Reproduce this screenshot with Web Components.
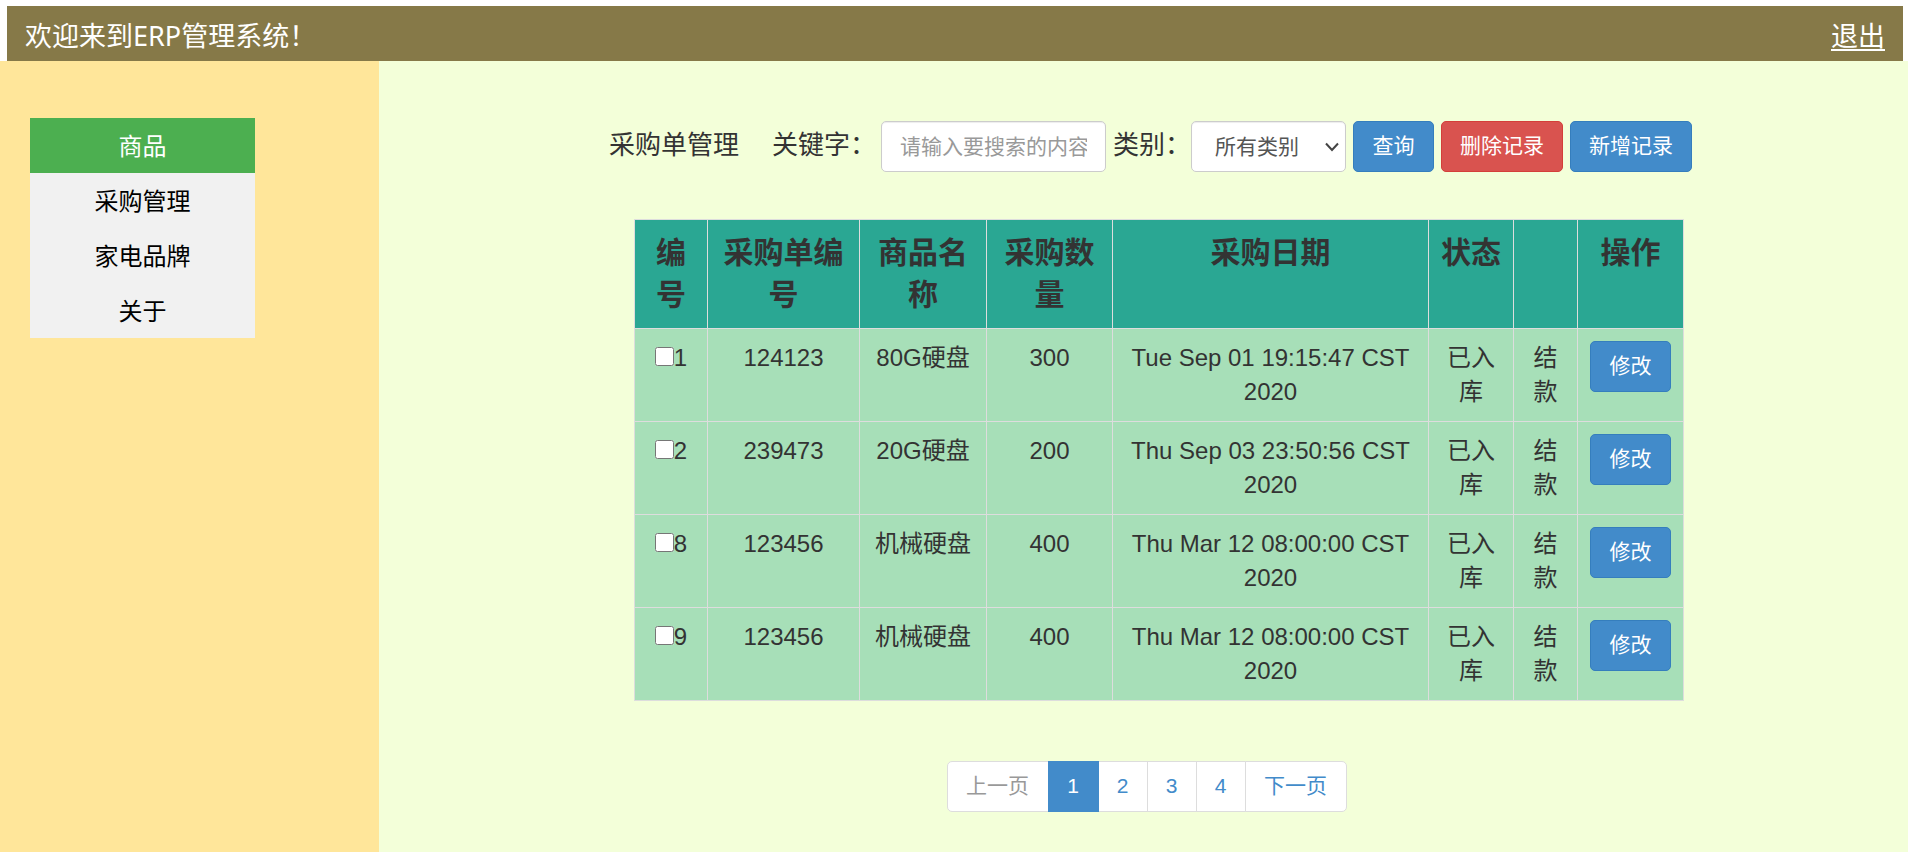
<!DOCTYPE html>
<html lang="zh-CN">
<head>
<meta charset="utf-8">
<meta name="viewport" content="width=device-width, initial-scale=1">
<title>ERP管理系统</title>
<style>
body { margin: 0; color: #333; background: #fff; font-family: "Liberation Sans", "Noto Sans CJK SC", sans-serif; font-size: 24px; }
</style>
</head>
<body>
<erp-app></erp-app>
<script>
const define = (name, html, setup) => {
  const template = document.createElement('template');
  template.innerHTML = '<style>*, *::before { box-sizing: border-box; }</style>' + html;
  customElements.define(name, class extends HTMLElement {
    constructor() {
      super();
      this.attachShadow({ mode: 'open' }).append(template.content.cloneNode(true));
    }
    connectedCallback() { if (setup) setup(this, this.shadowRoot); }
  });
};

define('erp-button', `
<style>
:host { display: inline-block; }
button { display: block; height: 51px; min-width: 81px; padding: 0 18px 2px; border: 1px solid #357ebd; border-radius: 5px; background: #428bca; color: #fff; font: inherit; font-size: 21px; line-height: 30px; white-space: nowrap; cursor: pointer; }
:host([kind="danger"]) button { background: #d9534f; border-color: #d43f3a; }
</style>
<button type="button"><slot></slot></button>`);

define('erp-header', `
<style>
:host { display: flex; justify-content: space-between; height: 55px; margin: 6px 5px 0 7px; padding: 6px 18px 0; background: #867948; color: #fff; font-family: "Noto Sans", "Noto Sans CJK SC", sans-serif; font-size: 27px; line-height: 48px; }
a { color: inherit; text-decoration: underline; text-underline-offset: 3px; text-decoration-thickness: 2px; }
</style>
<span><slot></slot></span><a href="#logout">退出</a>`);

define('erp-menu', `
<style>
:host { display: block; }
ul { list-style: none; margin: 0; padding: 0; width: 225px; background: #f1f1f1; }
a { display: block; height: 55px; line-height: 58px; text-align: center; color: #000; text-decoration: none; }
a.active { background: #4caf50; color: #fff; }
</style>
<nav><ul>
<li><a class="active" href="#goods">商品</a></li>
<li><a href="#purchase">采购管理</a></li>
<li><a href="#brand">家电品牌</a></li>
<li><a href="#about">关于</a></li>
</ul></nav>`);

define('erp-search', `
<style>
:host { display: block; }
form { display: flex; align-items: center; gap: 7px; white-space: nowrap; }
.title, label { font-size: 26px; line-height: 40px; padding-bottom: 4px; }
.title { margin-right: 26px; }
.field { display: flex; align-items: center; }
.keyword label { margin-right: 5px; }
input, select { height: 51px; border: 1px solid #ccc; border-radius: 5px; background: #fff; color: #555; font: inherit; font-size: 21px; box-shadow: inset 0 1px 1px rgba(0,0,0,.075); }
input { width: 225px; padding: 0 18px; }
input::placeholder { color: #999; opacity: 1; }
.select { display: grid; width: 155px; align-items: center; }
.select > * { grid-area: 1 / 1; }
select { width: 100%; padding: 0 23px; appearance: none; }
svg { justify-self: end; margin-right: 7px; pointer-events: none; z-index: 1; }
</style>
<form>
<span class="title">采购单管理</span>
<div class="field keyword"><label for="keyword">关键字：</label><input id="keyword" type="text" placeholder="请输入要搜索的内容"></div>
<div class="field"><label for="kind">类别：</label><span class="select"><select id="kind"><option>所有类别</option></select><svg width="14" height="10" viewBox="0 0 14 10" fill="none" stroke="#444" stroke-width="2"><path d="M1 1.500 7 8l6-6.500"/></svg></span></div>
<erp-button>查询</erp-button>
<erp-button kind="danger">删除记录</erp-button>
<erp-button>新增记录</erp-button>
</form>`);

define('erp-orders', `
<style>
:host { display: block; }
table { width: 100%; table-layout: fixed; border-collapse: collapse; background: #a7dfb8; text-align: center; line-height: 34px; }
th, td { border: 1px solid #ddd; padding: 12px; vertical-align: top; overflow-wrap: anywhere; }
th { padding: 12px 11px; background: #2aa793; font-size: 30px; line-height: 42px; }
input { width: 19px; height: 19px; margin: 0; vertical-align: 0; }
erp-button { display: block; margin-bottom: 17px; }
</style>
<table>
<colgroup><col style="width:73px"><col style="width:152px"><col style="width:127px"><col style="width:126px"><col style="width:316px"><col style="width:85px"><col style="width:64px"><col style="width:106px"></colgroup>
<thead><tr><th>编号</th><th>采购单编号</th><th>商品名称</th><th>采购数量</th><th>采购日期</th><th>状态</th><th></th><th>操作</th></tr></thead>
<tbody></tbody>
</table>`, (host, root) => {
  const orders = [
    [1, '124123', '80G硬盘', 300, 'Tue Sep 01 19:15:47 CST 2020'],
    [2, '239473', '20G硬盘', 200, 'Thu Sep 03 23:50:56 CST 2020'],
    [8, '123456', '机械硬盘', 400, 'Thu Mar 12 08:00:00 CST 2020'],
    [9, '123456', '机械硬盘', 400, 'Thu Mar 12 08:00:00 CST 2020']
  ];
  root.querySelector('tbody').innerHTML = orders.map(([id, ...cells]) =>
    `<tr><td><input type="checkbox" id="o${id}"><label for="o${id}">${id}</label></td>` +
    cells.map(c => `<td>${c}</td>`).join('') +
    '<td>已入库</td><td>结款</td><td><erp-button>修改</erp-button></td></tr>').join('');
});

define('erp-pager', `
<style>
:host { display: block; }
ul { display: flex; justify-content: center; list-style: none; margin: 0; padding: 0; }
a { display: block; width: 50px; height: 51px; margin-right: -1px; border: 1px solid #ddd; background: #fff; color: #428bca; font-size: 21px; line-height: 48px; text-align: center; text-decoration: none; }
a.step { width: 102px; }
li:first-child a { border-radius: 5px 0 0 5px; color: #999; }
li:last-child a { border-radius: 0 5px 5px 0; margin-right: 0; }
a.active { position: relative; width: 51px; background: #428bca; border-color: #428bca; color: #fff; }
</style>
<nav><ul>
<li><a class="step" href="#prev">上一页</a></li>
<li><a class="active" href="#1">1</a></li>
<li><a href="#2">2</a></li>
<li><a href="#3">3</a></li>
<li><a href="#4">4</a></li>
<li><a class="step" href="#next">下一页</a></li>
</ul></nav>`);

define('erp-app', `
<style>
:host { display: flex; flex-direction: column; min-height: 100vh; }
.body { flex: 1; display: flex; }
aside { flex: none; width: 379px; padding: 57px 30px; background: #ffe69a; }
main { flex: 1; min-width: 0; background: #f3ffd9; padding: 60px 0 40px; }
erp-search { padding-left: 230px; }
erp-orders { margin: 47px 224px 60px 255px; }
erp-pager { padding-left: 6px; }
</style>
<erp-header>欢迎来到ERP管理系统！</erp-header>
<div class="body">
<aside><erp-menu></erp-menu></aside>
<main><erp-search></erp-search><erp-orders></erp-orders><erp-pager></erp-pager></main>
</div>`);
</script>
</body>
</html>
